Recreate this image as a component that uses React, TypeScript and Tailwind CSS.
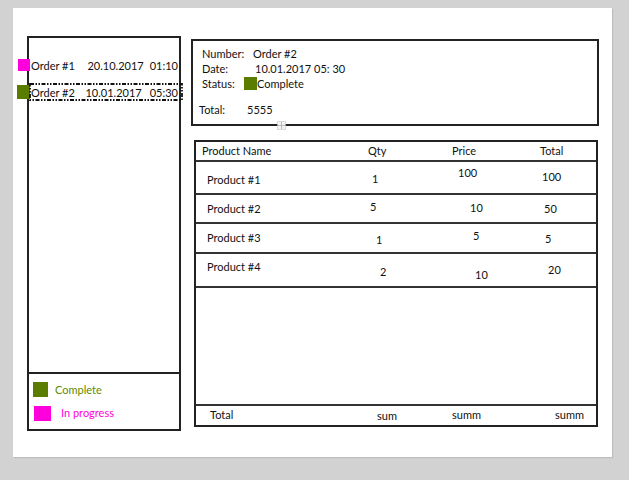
import React from "react";

type Cell = { t: string; c: string };

const rows: { h: string; cells: Cell[] }[] = [
  {
    h: "h-[33px]",
    cells: [
      { t: "Product #1", c: "ml-[11px] mt-[10px]" },
      { t: "1", c: "ml-[16px] mt-[9px]" },
      { t: "100", c: "ml-[22px] mt-[3px]" },
      { t: "100", c: "ml-[22px] mt-[7px]" },
    ],
  },
  {
    h: "h-[29px]",
    cells: [
      { t: "Product #2", c: "ml-[11px] mt-[6px]" },
      { t: "5", c: "ml-[14px] mt-[4px]" },
      { t: "10", c: "ml-[34px] mt-[5px]" },
      { t: "50", c: "ml-[24px] mt-[6px]" },
    ],
  },
  {
    h: "h-[30px]",
    cells: [
      { t: "Product #3", c: "ml-[11px] mt-[6px]" },
      { t: "1", c: "ml-[20px] mt-[8px]" },
      { t: "5", c: "ml-[37px] mt-[4px]" },
      { t: "5", c: "ml-[25px] mt-[7px]" },
    ],
  },
  {
    h: "h-[34px]",
    cells: [
      { t: "Product #4", c: "ml-[11px] mt-[5px]" },
      { t: "2", c: "ml-[24px] mt-[10px]" },
      { t: "10", c: "ml-[39px] mt-[13px]" },
      { t: "20", c: "ml-[28px] mt-[8px]" },
    ],
  },
];

const widths = ["w-[160px]", "w-[80px]", "w-[84px]", "flex-1"];

function Row({ cells, className }: { cells: Cell[]; className: string }) {
  return (
    <div className={`flex items-start ${className}`}>
      {cells.map((cell, i) => (
        <div key={i} className={widths[i]}>
          <div className={cell.c}>{cell.t}</div>
        </div>
      ))}
    </div>
  );
}

export default function App() {
  return (
    <div
      className="h-[480px] w-[629px] overflow-hidden bg-[#d2d2d2] pt-[8px] pl-[13px] text-[11px] leading-[15px] whitespace-nowrap text-[#111]"
      style={{ fontFamily: "Lato, 'Liberation Sans', sans-serif" }}
    >
      <div className="flex h-[449px] w-[599px] bg-white pt-[28px] pl-[14px] shadow-[1px_1px_1px_#bdbdbd]">
        {/* order list */}
        <div className="flex h-[395px] w-[154px] shrink-0 flex-col border-2 border-[#222]">
          <div className="flex-1 pt-[20px]">
            <div className="flex h-[14px] items-center pr-[1px]">
              <div className="ml-[-11px] h-[12px] w-[12px] shrink-0 bg-[#ff00dd]" />
              <span className="ml-[1px]">Order #1</span>
              <span className="flex-1" />
              <span>20.10.2017</span>
              <span className="ml-[6px]">01:10</span>
            </div>
            <div className="relative mt-[11px] flex h-[18px] items-center pr-[1px]">
              <div className="ml-[-12px] h-[14px] w-[13px] shrink-0 bg-[#5a7d00]" />
              <span className="ml-[1px]">Order #2</span>
              <span className="flex-1" />
              <span>10.01.2017</span>
              <span className="ml-[8px]">05:30</span>
              <svg className="absolute top-0 left-0 h-[18px] w-[154px]" viewBox="0 0 154 18">
                <rect
                  x="1"
                  y="1"
                  width="152"
                  height="16"
                  fill="none"
                  stroke="#111"
                  strokeWidth="1.8"
                  strokeDasharray="4 1.5 1.5 1.5 1.5 1.5"
                />
              </svg>
            </div>
          </div>
          <div className="h-[57px] border-t-2 border-[#222] pt-[8px]">
            <div className="flex items-center">
              <div className="ml-[4px] h-[15px] w-[15px] bg-[#5a7d00]" />
              <span className="ml-[7px] text-[#5f8a00]">Complete</span>
            </div>
            <div className="mt-[9px] flex items-center">
              <div className="ml-[5px] h-[15px] w-[17px] bg-[#ff00dd]" />
              <span className="ml-[10px] mt-[-3px] text-[#ff00dd]">In progress</span>
            </div>
          </div>
        </div>

        {/* right column */}
        <div className="ml-[10px] flex flex-col pt-[3px]">
          <div className="relative h-[87px] w-[408px] border-2 border-[#222] pt-[5px] pl-[9px]">
            <div className="flex">
              <span className="w-[51px]">Number:</span>
              <span>Order #2</span>
            </div>
            <div className="flex">
              <span className="w-[53px]">Date:</span>
              <span>10.01.2017 05: 30</span>
            </div>
            <div className="flex items-center">
              <span className="w-[42px]">Status:</span>
              <div className="h-[13px] w-[13px] bg-[#5a7d00]" />
              <span>Complete</span>
            </div>
            <div className="mt-[11px] ml-[-3px] flex">
              <span className="w-[48px]">Total:</span>
              <span>5555</span>
            </div>
            <svg className="absolute bottom-[-6px] left-[84px] h-[9px] w-[9px]" viewBox="0 0 9 9">
              <rect x="0.5" y="0.5" width="8" height="8" fill="#f4f4f4" stroke="#bbb" strokeDasharray="1 1" />
              <path d="M4.5 1v7M1 4.5h7" stroke="#bbb" strokeWidth="1" />
            </svg>
          </div>

          <div className="mt-[14px] ml-[3px] flex h-[287px] w-[404px] flex-col border-2 border-[#222]">
            <Row
              className="h-[20px] border-b-2 border-[#333] pt-[1px]"
              cells={[
                { t: "Product Name", c: "ml-[6px]" },
                { t: "Qty", c: "ml-[12px]" },
                { t: "Price", c: "ml-[16px]" },
                { t: "Total", c: "ml-[20px]" },
              ]}
            />
            {rows.map((r, i) => (
              <Row key={i} className={`${r.h} border-b-2 border-[#333]`} cells={r.cells} />
            ))}
            <div className="flex-1" />
            <Row
              className="h-[21px] border-t-2 border-[#333]"
              cells={[
                { t: "Total", c: "ml-[14px] mt-[1px]" },
                { t: "sum", c: "ml-[21px] mt-[2px]" },
                { t: "summ", c: "ml-[16px] mt-[1px]" },
                { t: "summ", c: "ml-[35px] mt-[1px]" },
              ]}
            />
          </div>
        </div>
      </div>
    </div>
  );
}
